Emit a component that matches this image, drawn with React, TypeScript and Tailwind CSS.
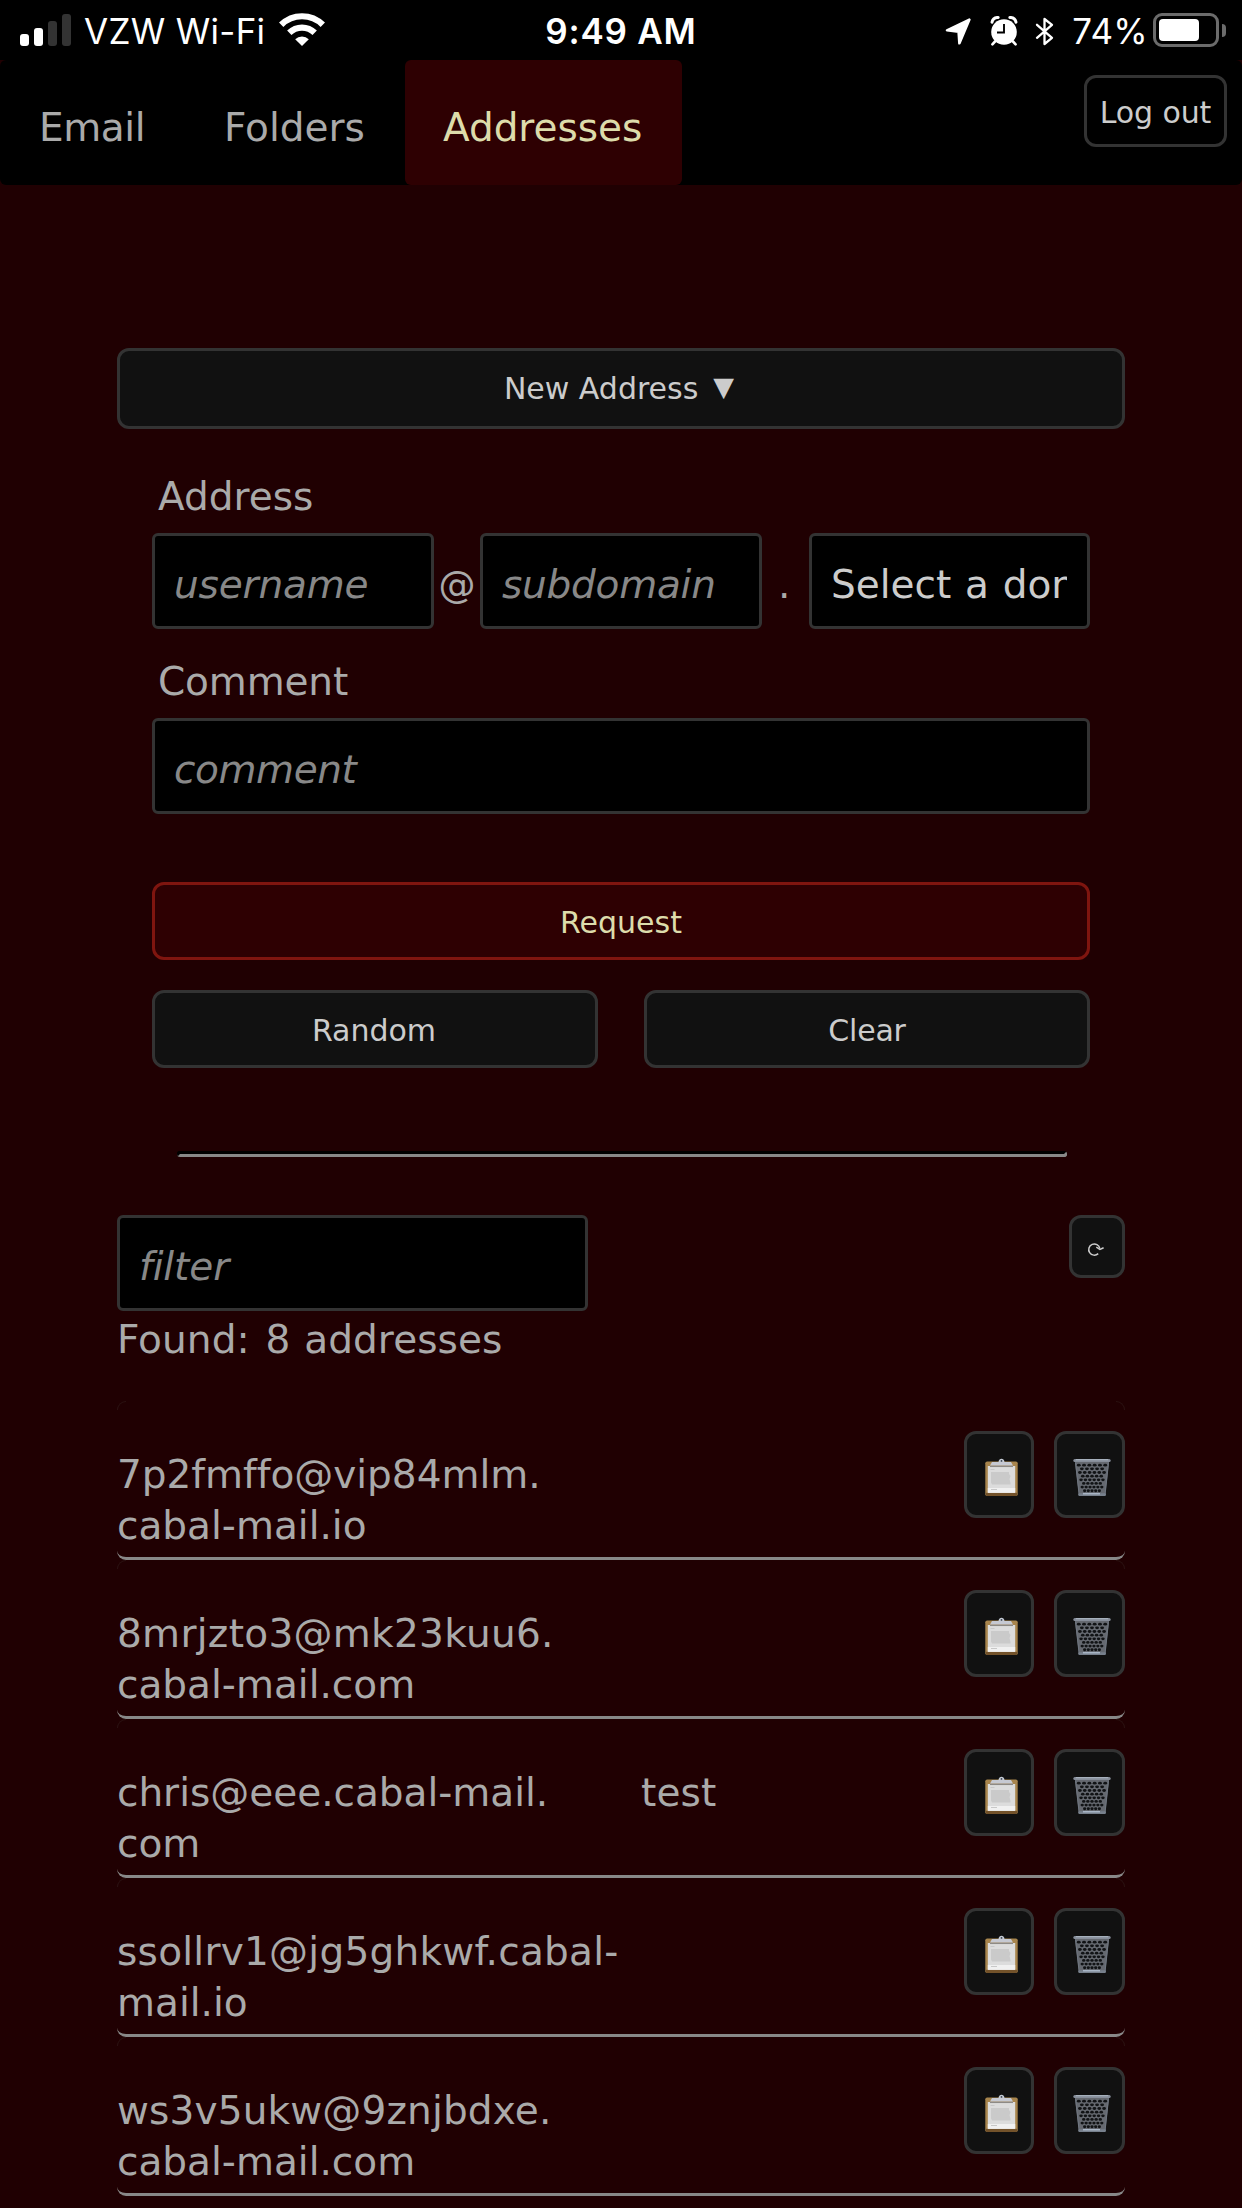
import React from "react";

type Entry = { lines: [string, string]; tracking: string; comment?: string };

const ENTRIES: Entry[] = [
  { lines: ["7p2fmffo@vip84mlm.", "cabal-mail.io"], tracking: "tracking-[-0.02px]" },
  { lines: ["8mrjzto3@mk23kuu6.", "cabal-mail.com"], tracking: "tracking-[0.3px]" },
  { lines: ["chris@eee.cabal-mail.", "com"], tracking: "tracking-[-0.02px]", comment: "test" },
  { lines: ["ssollrv1@jg5ghkwf.cabal-", "mail.io"], tracking: "tracking-[0.25px]" },
  { lines: ["ws3v5ukw@9znjbdxe.", "cabal-mail.com"], tracking: "tracking-[0.15px]" },
];

function StatusBar() {
  return (
    <div className="grid h-[60px] grid-cols-[1fr_auto_1fr] bg-black text-[35px] leading-[42px] text-white font-['Inter',sans-serif]">
      <div className="flex pl-5">
        <div className="mt-[14px] flex h-8 items-end gap-[5px]">
          <span className="h-3 w-[9px] rounded-[3px] bg-white" />
          <span className="h-[18px] w-[9px] rounded-[3px] bg-white" />
          <span className="h-[25px] w-[9px] rounded-[3px] bg-[#333]" />
          <span className="h-8 w-[9px] rounded-[3px] bg-[#333]" />
        </div>
        <span className="ml-[13px] mt-[10px] tracking-[0.3px]">VZW Wi-Fi</span>
        <svg className="ml-[14px] mt-[13px]" width="46" height="33" viewBox="0 0 46 33" fill="none">
          <path d="M2.2 11.8a29.6 29.6 0 0 1 41.6 0" stroke="#fff" strokeWidth="6.2" />
          <path d="M10.3 19.8a18.2 18.2 0 0 1 25.4 0" stroke="#fff" strokeWidth="6.2" />
          <path d="M16.2 26.2a9.8 9.8 0 0 1 13.6 0L23 33z" fill="#fff" />
        </svg>
      </div>
      <span className="mt-[10px] font-semibold tracking-[0.8px]">9:49 AM</span>
      <div className="flex justify-end pr-4">
        <svg className="mt-[18px]" width="27" height="27" viewBox="0 0 27 27">
          <path
            d="M24.4 1.6 2 12.3l11.6 1.4.8 11.6z"
            fill="#fff"
            stroke="#fff"
            strokeWidth="2.6"
            strokeLinejoin="round"
          />
        </svg>
        <svg className="ml-[18px] mt-[16px]" width="28" height="30" viewBox="0 0 28 30">
          <circle cx="14" cy="16" r="12.8" fill="#fff" />
          <path d="M2 6.2Q3 1.2 8.2 1.5M19.8 1.5Q25 1.2 26 6.2" stroke="#fff" strokeWidth="3" fill="none" strokeLinecap="round" />
          <path d="M5 25.5l-2.6 2.8M23 25.5l2.6 2.8" stroke="#fff" strokeWidth="2.6" strokeLinecap="round" />
          <path d="M14 8v8.500H7" stroke="#000" strokeWidth="1.900" fill="none" />
        </svg>
        <svg className="ml-[17px] mt-[16px]" width="19" height="31" viewBox="0 0 19 31">
          <path
            d="M2 8.8 17 21.8 9.500 28V3L17 8.800 2 21.800"
            fill="none"
            stroke="#fff"
            strokeWidth="2.3"
            strokeLinejoin="round"
            strokeLinecap="round"
          />
        </svg>
        <span className="ml-[18px] mt-[10px] tracking-[0.3px]">74%</span>
        <div className="ml-[5px] mt-[13px] h-[34px] w-[66px] rounded-[9px] border-[3px] border-[#6b6b6b] p-[3px]">
          <div className="h-[22px] w-10 rounded-[4px] bg-white" />
        </div>
        <div className="ml-[3px] mt-6 h-[13px] w-1 rounded-r-full bg-[#6b6b6b]" />
      </div>
    </div>
  );
}

function Nav() {
  return (
    <nav className="flex h-[125px] items-stretch rounded-[6px] bg-black text-[39px] leading-[51px]">
      <a className="w-[186px] pl-[39px] pt-[42px] tracking-[-0.4px]">Email</a>
      <a className="w-[219px] pl-[38px] pt-[42px]">Folders</a>
      <a className="w-[277px] rounded-[6px] bg-[#2e0002] pl-[38px] pt-[42px] tracking-[-0.05px] text-[#dddcab]">
        Addresses
      </a>
      <button className="ml-auto mr-[15px] mt-[15px] h-[72px] w-[143px] whitespace-nowrap rounded-[12px] border-[3px] border-[#333] pt-[3px] text-[30px] leading-9 tracking-[-0.1px] text-[#ccc]">
        Log out
      </button>
    </nav>
  );
}

const INPUT =
  "block h-24 rounded-[6px] border-[3px] border-[#333] bg-black pl-[19px] pt-[23px] text-[39px] leading-[51px]";
const BUTTON =
  "block h-[78px] rounded-[12px] border-[3px] border-[#333] bg-[#111] pt-[3px] text-[30px] leading-9 text-[#ccc]";

function Placeholder({ className, text }: { className: string; text: string }) {
  return <div className={`${INPUT} italic text-[#888] ${className}`}>{text}</div>;
}

function AddressForm() {
  return (
    <section className="ml-[35px] flex w-[938px] flex-col pt-[42px]">
      <label className="ml-[6px]">Address</label>
      <div className="mt-[11px] flex">
        <Placeholder className="w-[282px] tracking-[-0.15px]" text="username" />
        <span className="w-[46px] pt-[26px] text-center text-[37px]">@</span>
        <Placeholder className="w-[282px] tracking-[-0.25px]" text="subdomain" />
        <span className="w-[47px] pt-[26px] pl-4">.</span>
        <div className={`${INPUT} w-[281px] pr-5 text-[#ccc]`}>
          <div className="overflow-hidden whitespace-nowrap">Select a domain</div>
        </div>
      </div>
      <label className="ml-[6px] mt-[27px] tracking-[-0.15px]">Comment</label>
      <Placeholder className="mt-[11px] w-full tracking-[-0.4px]" text="comment" />
      <button className="mt-[68px] h-[78px] rounded-[12px] border-[3px] border-[#7f150f] bg-[#2e0002] pt-[3px] text-[30px] leading-9 text-[#dddcab]">
        Request
      </button>
      <div className="mt-[30px] flex justify-between">
        <button className={`${BUTTON} w-[446px] pr-[2px]`}>Random</button>
        <button className={`${BUTTON} w-[446px] tracking-[-0.2px]`}>Clear</button>
      </div>
    </section>
  );
}

function ClipboardIcon() {
  return (
    <svg width="33" height="39" viewBox="0 0 33 39">
      <rect x="0.3" y="3.5" width="32.4" height="34.5" rx="1.8" fill="#a8854d" />
      <rect x="0.8" y="34.8" width="31.4" height="3.2" rx="1" fill="#73522a" />
      <rect x="2.8" y="8" width="27.4" height="26.8" fill="#dcdcdc" />
      <path d="M2.8 30h27.4v4.8H2.800z" fill="#f0f0f0" />
      <path d="M6 14h18v2l1.500 2-1 3 1 4v1.500H7l-1-2z" fill="#cacaca" />
      <path d="M5.500 11.500h4M6 31.500h6" stroke="#c8c8c8" strokeWidth="1" />
      <path d="M5 8.300h23" stroke="#8d8a86" strokeWidth="1.500" />
      <path d="M7 4h19l2 3.600H5z" fill="#c6c9d2" />
      <path d="M13.500 4c.5-4.200 5.500-4.200 6 0z" fill="#c6ccd6" />
      <circle cx="16.500" cy="2.900" r="0.900" fill="#39424e" />
    </svg>
  );
}

const MESH_ROWS = [0, 1, 2, 3, 4, 5, 6, 7];

function TrashIcon() {
  return (
    <svg width="38" height="39" viewBox="0 0 38 39">
      <path d="M2 4h34l-3.800 33.500H6z" fill="#656970" />
      {MESH_ROWS.map((r) => {
        const count = r % 2 === 0 ? 6 : 5;
        const step = 5.3 - r * 0.23;
        return Array.from({ length: count }, (_, i) => (
          <ellipse
            key={`${r}-${i}`}
            cx={19 + (i - (count - 1) / 2) * step}
            cy={7.2 + r * 3.65}
            rx={1.95 - r * 0.05}
            ry="1.4"
            fill="#111315"
          />
        ));
      })}
      <path d="M2.500 4.500 6.200 37M35.500 4.500 32 37" stroke="#6f7680" strokeWidth="1.100" />
      <rect x="0.300" y="1" width="37.400" height="3" rx="1.500" fill="#868d99" />
      <path d="M3 1.700h32" stroke="#b3bdc9" strokeWidth="0.900" />
      <rect x="5.300" y="35.300" width="27.600" height="2.700" rx="1" fill="#77808c" />
      <path d="M10 35.800h17" stroke="#bccbdc" strokeWidth="1.100" />
    </svg>
  );
}

function AddressRow({ entry }: { entry: Entry }) {
  return (
    <li className="relative flex h-[159px] rounded-[9px] border-b-[3px] border-[#888]">
      <span className="absolute left-0 top-0 h-[9px] w-[9px] rounded-tl-[9px] border-l border-t border-[#2b1213]" />
      <span className="absolute right-0 top-0 h-[9px] w-[9px] rounded-tr-[9px] border-r border-t border-[#2b1213]" />
      <div className="w-[524px] whitespace-nowrap pt-[48px] [font-variant-ligatures:none]">
        <div className={entry.tracking}>{entry.lines[0]}</div>
        <div>{entry.lines[1]}</div>
      </div>
      <div className="w-[323px] pt-[48px] tracking-[0.1px]">{entry.comment}</div>
      <button className="mt-[30px] flex h-[87px] w-[70px] items-start rounded-[12px] border-[3px] border-[#333] bg-[#111] pl-[18px] pt-[24px]">
        <ClipboardIcon />
      </button>
      <button className="ml-5 mt-[30px] flex h-[87px] w-[71px] items-start rounded-[12px] border-[3px] border-[#333] bg-[#111] pl-4 pt-[24px]">
        <TrashIcon />
      </button>
    </li>
  );
}

export default function App() {
  return (
    <div className="h-[2208px] w-[1242px] overflow-hidden bg-[#200002] text-[39px] leading-[51px] text-[#aaa] font-['DejaVu_Sans',Verdana,sans-serif]">
      <StatusBar />
      <Nav />
      <main className="ml-[117px] flex w-[1008px] flex-col pt-[163px] [word-spacing:0.034em]">
        <button className="flex h-[81px] items-center justify-center rounded-[12px] border-[3px] border-[#333] bg-[#111] pr-1 text-[30px] leading-9 text-[#ccc]">
          <span>New Address</span>
          <span className="ml-[15px] -translate-y-[2px] text-[27px]">▼</span>
        </button>
        <AddressForm />
        <hr className="ml-[60px] mt-[83px] h-[6px] w-[890px] rounded-[3px] border-[3px] border-b-[#888] border-l-black border-r-[#888] border-t-black" />
        <div className="mt-[58px] flex items-start justify-between">
          <Placeholder className="w-[471px] tracking-[-0.1px]" text="filter" />
          <button className="flex h-[63px] w-14 items-start rounded-[12px] border-[3px] border-[#333] bg-[#111] pl-[15px] pt-[24px]">
            <svg width="18" height="16" viewBox="0 0 18 16" fill="none">
              <path d="M11.200 11.600a5.600 5.600 0 1 1 1.600-5.200" stroke="#ccc" strokeWidth="1.500" />
              <path d="M9.300 5.200l3.600 2.200 3.700-1.700" stroke="#ccc" strokeWidth="1.500" />
            </svg>
          </button>
        </div>
        <div className="mt-[3px] tracking-[0.08px]">
          Found:<span className="ml-[2px]"> 8 addresses</span>
        </div>
        <ul className="mt-9">
          {ENTRIES.map((entry) => (
            <AddressRow key={entry.lines[0]} entry={entry} />
          ))}
        </ul>
      </main>
    </div>
  );
}
